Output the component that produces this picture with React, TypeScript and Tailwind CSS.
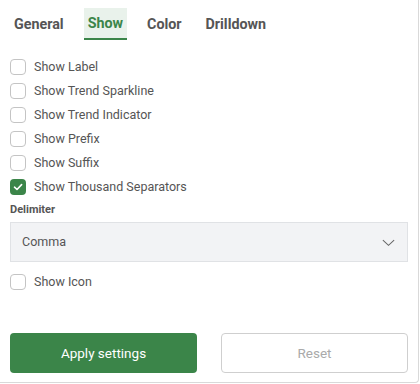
import React, { useState } from "react";

const font = { fontFamily: "Roboto, 'Open Sans', sans-serif" };

function Check({ checked, label }: { checked?: boolean; label: string }) {
  return (
    <div className="flex h-6 items-center">
      {checked ? (
        <div className="flex h-4 w-4 items-center justify-center rounded-[4px] bg-[#3b8549]">
          <svg width="10" height="8" viewBox="0 0 10 8" fill="none">
            <path d="M1.5 4.2 L4 6.5 L8.6 1.6" stroke="white" strokeWidth="1.6" strokeLinecap="round" strokeLinejoin="round" />
          </svg>
        </div>
      ) : (
        <div className="h-4 w-4 rounded-[4px] border border-[#c4c4c4] bg-white" />
      )}
      <span className="ml-2 text-[12.5px] text-[#555]">{label}</span>
    </div>
  );
}

export default function App() {
  const [tab] = useState("Show");
  const tabs = ["General", "Show", "Color", "Drilldown"];
  return (
    <div style={font} className="h-[383px] w-[419px] rounded-br-[4px] border-b border-r border-[#d9d9d9] bg-white">
      <div className="flex gap-[16px] pl-[10px] pt-[8px]">
        {tabs.map((t) => (
          <div
            key={t}
            className={
              t === tab
                ? "flex h-[32px] items-center border-b-2 border-[#3b8549] bg-[#e9f2eb] px-1 pt-[2px] text-[14.3px] font-bold text-[#3b8549]"
                : "flex h-[32px] items-center px-1 pt-[2px] text-[14.3px] font-bold text-[#555]"
            }
          >
            {t}
          </div>
        ))}
      </div>
      <div className="px-[10px] pt-[15px]">
        <Check label="Show Label" />
        <Check label="Show Trend Sparkline" />
        <Check label="Show Trend Indicator" />
        <Check label="Show Prefix" />
        <Check label="Show Suffix" />
        <Check checked label="Show Thousand Separators" />
        <div className="mt-[4px] text-[11px] font-bold leading-[14px] text-[#555]">Delimiter</div>
        <div className="mt-[5px] flex h-[40px] items-center justify-between border border-[#e0e2e5] bg-[#f2f3f5] pl-[11px] pr-[11px]">
          <span className="text-[12.5px] text-[#555]">Comma</span>
          <svg width="15" height="15" viewBox="0 0 16 16" fill="none">
            <path d="M2 5.5 L8 11 L14 5.5" stroke="#666" strokeWidth="1.1" />
          </svg>
        </div>
        <div className="mt-[8px]">
          <Check label="Show Icon" />
        </div>
        <div className="mt-[39px] flex justify-between">
          <button className="h-[40px] w-[187px] rounded-[4px] bg-[#3b8549] text-[13.5px] text-white">Apply settings</button>
          <button className="h-[40px] w-[187px] rounded-[4px] border border-[#cfcfcf] bg-white text-[13.5px] text-[#aaa]">Reset</button>
        </div>
      </div>
    </div>
  );
}
